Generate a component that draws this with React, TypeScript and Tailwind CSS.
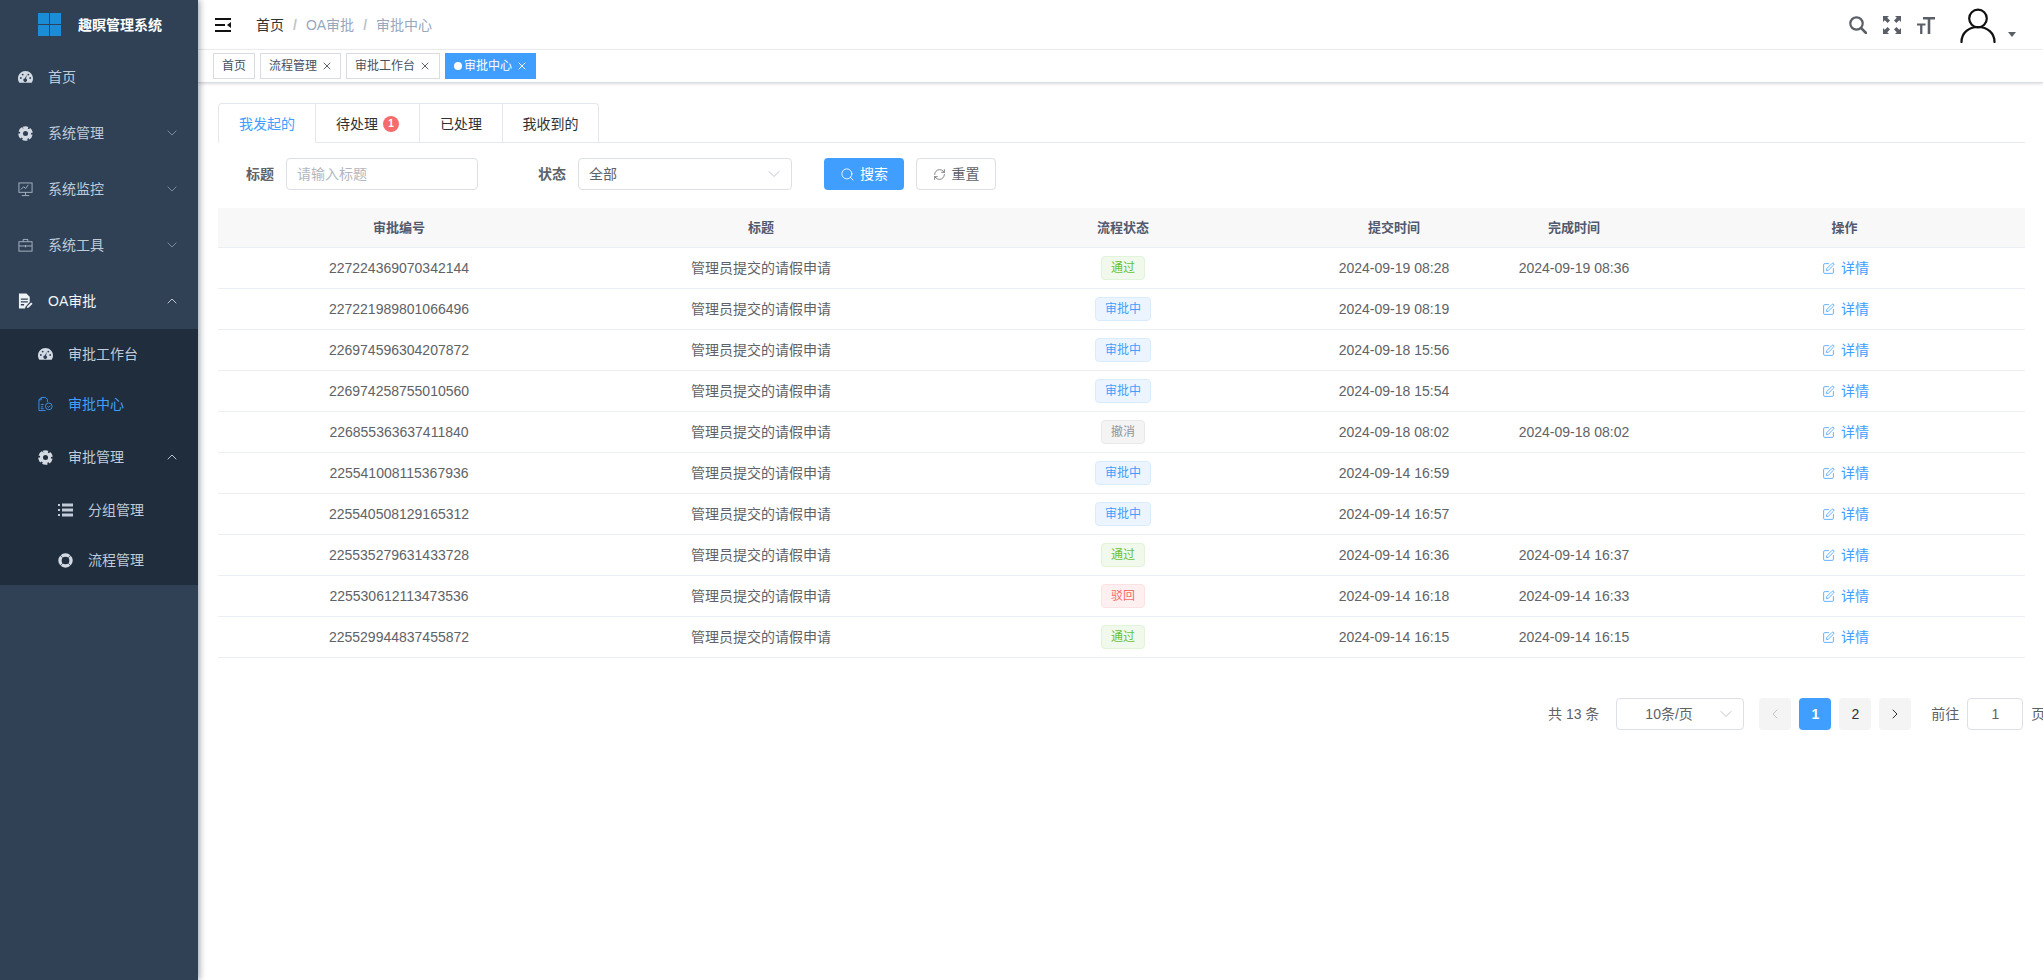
import { ChevronDown, ChevronLeft, ChevronRight, ChevronUp, RefreshCw, Search, SquarePen, X } from "lucide-react";
import type { ReactNode } from "react";

const FONT = "font-['Liberation_Sans','Noto_Sans_CJK_SC',sans-serif]";

// sidebar icons, drawn by hand because the packages have nothing close enough
function DashIcon() {
  return (
    <svg viewBox="0 0 16 14" className="h-[14px] w-[15px] shrink-0" fill="#d3dae3">
      <path d="M8 0.5C3.6 0.5 0 4.1 0 8.5c0 1.7.5 3.3 1.4 4.6h13.2c.9-1.3 1.4-2.9 1.4-4.6 0-4.4-3.6-8-8-8z" />
      <circle cx="3" cy="8" r="1" fill="#304156" />
      <circle cx="5" cy="4.4" r="1" fill="#304156" />
      <circle cx="11" cy="4.4" r="1" fill="#304156" />
      <circle cx="13" cy="8" r="1" fill="#304156" />
      <path d="M9.4 4.6 8.6 8.8a1.9 1.9 0 1 1-1.4-.2z" fill="#304156" />
    </svg>
  );
}

function GearIcon() {
  return (
    <svg viewBox="0 0 16 16" className="h-[15px] w-[15px] shrink-0" fill="none" stroke="#d3dae3">
      <circle cx="8" cy="8" r="4.3" strokeWidth="3.2" />
      <circle cx="8" cy="8" r="6.4" strokeWidth="2.6" strokeDasharray="5 1.7" transform="rotate(-112 8 8)" />
    </svg>
  );
}

function MonitorIcon() {
  return (
    <svg viewBox="0 0 16 16" className="h-[15px] w-[15px] shrink-0" fill="none" stroke="#a9b5c3" strokeWidth="1">
      <rect x="1" y="1" width="14" height="10" />
      <path d="M3 8l3-3 2 2 3-4M8 11v3M4 14.5h8" />
    </svg>
  );
}

function ToolboxIcon() {
  return (
    <svg viewBox="0 0 16 16" className="h-[15px] w-[15px] shrink-0" fill="none" stroke="#a9b5c3" strokeWidth="1">
      <rect x="1" y="4" width="14" height="10" />
      <path d="M5.5 4V1.5h5V4M1 8.5h14M8 7.5v2.5" />
    </svg>
  );
}

function DocPenIcon() {
  return (
    <svg viewBox="0 0 16 16" className="h-[16px] w-[15px] shrink-0" fill="#eef1f5">
      <path d="M1 0h8l3.5 3.500V9L8 14l-.5 2H1z" />
      <path d="M3 6h7.500M3 9h7.500M3 12h3.500" stroke="#304156" strokeWidth="1.400" />
      <path d="M9.500 15.500l.5-2 4-4 1.500 1.500-4 4z" />
    </svg>
  );
}

function DocCheckIcon() {
  return (
    <svg viewBox="0 0 16 16" className="h-[16px] w-[15px] shrink-0" fill="none" stroke="#409eff" strokeWidth="0.900">
      <path d="M3.500 1h4.500l2 2v3M8 15H1V3.500L3.500 1v2.500H1" />
      <path d="M3 8.500h3M3 11h2.500M3 13h3" />
      <circle cx="11.500" cy="10.500" r="3.600" />
      <path d="M10 10.500l1.200 1.200 1.800-2" />
    </svg>
  );
}

function ListIcon() {
  return (
    <svg viewBox="0 0 15 14" className="h-[14px] w-[15px] shrink-0" fill="#c3ccd8">
      <rect x="0" y="1" width="2" height="2" />
      <rect x="4" y="0.5" width="11" height="3" />
      <rect x="0" y="6" width="2" height="2" />
      <rect x="4" y="5.5" width="11" height="3" />
      <rect x="0" y="11" width="2" height="2" />
      <rect x="4" y="10.5" width="11" height="3" />
    </svg>
  );
}

function RingIcon() {
  return (
    <svg viewBox="0 0 16 16" className="h-[15px] w-[15px] shrink-0" fill="none">
      <circle cx="8" cy="8" r="5.900" stroke="#d3dae3" strokeWidth="3.600" />
      <path d="M1.500 1.500l3.500 3.500M14.500 1.500 11 5M1.500 14.500 5 11M14.500 14.500 11 11" stroke="#1f2d3d" strokeWidth="0.800" />
    </svg>
  );
}

function MenuRow({
  icon,
  label,
  open,
  className,
  textClass = "text-[#bfcbd9]",
}: {
  icon: ReactNode;
  label: string;
  open?: boolean;
  className: string;
  textClass?: string;
}) {
  return (
    <div className={`flex items-center ${className}`}>
      <span className="flex w-[30px] shrink-0 items-center">{icon}</span>
      <span className={`text-sm ${textClass}`}>{label}</span>
      {open === true && <ChevronUp className="ml-auto mr-[18px] h-[16px] w-[16px] text-[#e6eaf0]" strokeWidth={1.2} />}
      {open === false && <ChevronDown className="ml-auto mr-[18px] h-[16px] w-[16px] text-[#909bab]" strokeWidth={1.2} />}
    </div>
  );
}

function Sidebar() {
  return (
    <aside className="z-10 flex w-[198px] shrink-0 flex-col bg-[#304156] shadow-[2px_0_6px_rgba(0,21,41,0.35)]">
      <div className="flex h-[49px] items-center pl-[38px]">
        <div className="grid h-[23px] w-[23px] shrink-0 grid-cols-2 gap-[1.5px]">
          <i className="bg-[#1a8dd6]" />
          <i className="bg-[#1a8dd6]" />
          <i className="bg-[#1a8dd6]" />
          <i className="bg-[#1a8dd6]" />
        </div>
        <span className="ml-[17px] text-sm font-bold text-white">趣瞑管理系统</span>
      </div>
      <MenuRow className="h-[56px] pl-[18px]" icon={<DashIcon />} label="首页" />
      <MenuRow className="h-[56px] pl-[18px]" icon={<GearIcon />} label="系统管理" open={false} />
      <MenuRow className="h-[56px] pl-[18px]" icon={<MonitorIcon />} label="系统监控" open={false} />
      <MenuRow className="h-[56px] pl-[18px]" icon={<ToolboxIcon />} label="系统工具" open={false} />
      <MenuRow className="h-[56px] pl-[18px]" icon={<DocPenIcon />} label="OA审批" open textClass="text-[#f4f4f5]" />
      <div className="bg-[#1f2d3d]">
        <MenuRow className="h-[50px] pl-[38px]" icon={<DashIcon />} label="审批工作台" />
        <MenuRow className="h-[50px] pl-[38px]" icon={<DocCheckIcon />} label="审批中心" textClass="text-[#409eff]" />
        <MenuRow className="h-[56px] pl-[38px]" icon={<GearIcon />} label="审批管理" open />
        <MenuRow className="h-[50px] pl-[58px]" icon={<ListIcon />} label="分组管理" />
        <MenuRow className="h-[50px] pl-[58px]" icon={<RingIcon />} label="流程管理" />
      </div>
    </aside>
  );
}

function Navbar() {
  return (
    <header className="flex h-[50px] items-center border-b border-[#f3f3f3] pl-[17px]">
      <svg viewBox="0 0 16 14" className="h-[14px] w-[16px]" fill="#111">
        <rect x="0" y="0" width="16" height="2" />
        <rect x="0" y="6" width="10" height="2" />
        <rect x="0" y="12" width="16" height="2" />
        <path d="M16 4v6l-4-3z" />
      </svg>
      <div className="ml-[25px] flex items-center text-sm">
        <span className="text-[#303133]">首页</span>
        <span className="mx-[9px] font-bold text-[#c0c4cc]">/</span>
        <span className="text-[#97a8be]">OA审批</span>
        <span className="mx-[9px] font-bold text-[#c0c4cc]">/</span>
        <span className="text-[#97a8be]">审批中心</span>
      </div>
      <div className="ml-auto flex items-center">
        <svg viewBox="0 0 18 18" className="h-[18px] w-[18px]" fill="none" stroke="#5a5e66" strokeLinecap="round">
          <circle cx="7.500" cy="7.500" r="6.200" strokeWidth="2.200" />
          <path d="M12.200 12.200 17 17" strokeWidth="2.600" />
        </svg>
        <svg viewBox="0 0 18 18" className="ml-[16px] h-[18px] w-[18px]" fill="#5a5e66">
          <path d="M0 0h6L4.200 1.800 7 4.600 4.600 7 1.800 4.200 0 6zM18 0v6l-1.800-1.800L13.400 7 11 4.600l2.800-2.800L12 0zM0 18v-6l1.800 1.800L4.600 11 7 13.400l-2.800 2.800L6 18zM18 18h-6l1.800-1.800L11 13.400l2.400-2.400 2.800 2.800L18 12z" />
        </svg>
        <svg viewBox="0 0 18 18" className="ml-[16px] h-[18px] w-[18px]" fill="#5a5e66">
          <path d="M6 1h12v2.400h-4.700V18h-2.600V3.400H6zM0 7.500h8.500v2H5.400V18H3.100V9.500H0z" />
        </svg>
        <svg
          viewBox="0 0 36 36"
          className="ml-[25px] h-[36px] w-[36px]"
          fill="none"
          stroke="#111"
          strokeWidth="2.200"
          strokeLinecap="round"
        >
          <circle cx="18" cy="11.500" r="8.800" />
          <path d="M1.500 35c0-9 7-15 16.500-15s16.500 6 16.500 15" />
        </svg>
        <span className="ml-[12px] mr-[27px] mt-[19px] h-0 w-0 border-x-[4px] border-t-[5px] border-x-transparent border-t-[#5a5e66]" />
      </div>
    </header>
  );
}

function Tag({ label, width, active, closable = true }: { label: string; width: string; active?: boolean; closable?: boolean }) {
  return (
    <div
      className={`flex h-[26px] items-center border pl-[8px] text-xs ${width} ${
        active ? "border-[#409eff] bg-[#409eff] text-white" : "border-[#d8dce5] bg-white text-[#495060]"
      }`}
    >
      {active && <span className="mr-[2px] h-[8px] w-[8px] rounded-full bg-white" />}
      {label}
      {closable && (
        <span className="flex w-[16px] justify-end">
          <X className="h-[12px] w-[12px]" strokeWidth={1.8} />
        </span>
      )}
    </div>
  );
}

function TagsView() {
  return (
    <div className="flex h-[33px] items-start gap-[5px] border-b border-[#d8dce5] pl-[15px] pt-[3px] shadow-[0_1px_3px_0_rgba(0,0,0,0.12),0_0_3px_0_rgba(0,0,0,0.04)]">
      <Tag label="首页" width="w-[42px]" closable={false} />
      <Tag label="流程管理" width="w-[81px]" />
      <Tag label="审批工作台" width="w-[94px]" />
      <Tag label="审批中心" width="w-[91px]" active />
    </div>
  );
}

function Tabs() {
  return (
    <div className="flex h-[40px] border-b border-[#e4e7ed]">
      <div className="flex h-[40px] rounded-t border-x border-t border-[#e4e7ed] text-sm text-[#303133]">
        <div className="flex h-[39px] w-[96px] items-center justify-center border-b border-white pt-[2px] text-[#409eff]">我发起的</div>
        <div className="flex h-[39px] w-[104px] items-center justify-center border-b border-l border-[#e4e7ed] pt-[2px]">
          待处理
          <span className="ml-[5px] flex h-[16px] w-[16px] items-center justify-center rounded-full bg-[#f56c6c] text-[10px] font-bold text-white">
            1
          </span>
        </div>
        <div className="flex h-[39px] w-[83px] items-center justify-center border-b border-l border-[#e4e7ed] pt-[2px]">已处理</div>
        <div className="flex h-[39px] w-[96px] items-center justify-center border-b border-l border-[#e4e7ed] pt-[2px]">我收到的</div>
      </div>
    </div>
  );
}

function SearchForm() {
  return (
    <div className="mt-[15px] flex h-[32px] items-center text-sm">
      <span className="ml-[28px] font-bold text-[#606266]">标题</span>
      <div className="ml-[12px] flex h-[32px] w-[192px] items-center rounded border border-[#dcdfe6] px-[10px] text-[#b3b7bf]">
        请输入标题
      </div>
      <span className="ml-[60px] font-bold text-[#606266]">状态</span>
      <div className="ml-[12px] flex h-[32px] w-[214px] items-center justify-between rounded border border-[#dcdfe6] pl-[10px] pr-[7px] text-[#606266]">
        全部
        <ChevronDown className="h-[20px] w-[20px] text-[#b3b7bf]" strokeWidth={1} />
      </div>
      <button className="ml-[32px] flex h-[32px] w-[80px] items-center justify-center gap-[5px] rounded bg-[#409eff] text-white">
        <Search className="h-[15px] w-[15px]" strokeWidth={1.4} />
        搜索
      </button>
      <button className="ml-[12px] flex h-[32px] w-[80px] items-center justify-center gap-[6px] rounded border border-[#dcdfe6] text-[#606266]">
        <RefreshCw className="h-[13px] w-[13px]" strokeWidth={1.4} />
        重置
      </button>
    </div>
  );
}

const STATUS = {
  pass: { label: "通过", cls: "w-[44px] border-[#e1f3d8] bg-[#f0f9eb] text-[#67c23a]" },
  doing: { label: "审批中", cls: "w-[56px] border-[#d9ecff] bg-[#ecf5ff] text-[#409eff]" },
  cancel: { label: "撤消", cls: "w-[44px] border-[#e9e9eb] bg-[#f4f4f5] text-[#909399]" },
  reject: { label: "驳回", cls: "w-[44px] border-[#fde2e2] bg-[#fef0f0] text-[#f56c6c]" },
};

type Row = { id: string; status: keyof typeof STATUS; submit: string; done?: string };

const ROWS: Row[] = [
  { id: "227224369070342144", status: "pass", submit: "2024-09-19 08:28", done: "2024-09-19 08:36" },
  { id: "227221989801066496", status: "doing", submit: "2024-09-19 08:19" },
  { id: "226974596304207872", status: "doing", submit: "2024-09-18 15:56" },
  { id: "226974258755010560", status: "doing", submit: "2024-09-18 15:54" },
  { id: "226855363637411840", status: "cancel", submit: "2024-09-18 08:02", done: "2024-09-18 08:02" },
  { id: "225541008115367936", status: "doing", submit: "2024-09-14 16:59" },
  { id: "225540508129165312", status: "doing", submit: "2024-09-14 16:57" },
  { id: "225535279631433728", status: "pass", submit: "2024-09-14 16:36", done: "2024-09-14 16:37" },
  { id: "225530612113473536", status: "reject", submit: "2024-09-14 16:18", done: "2024-09-14 16:33" },
  { id: "225529944837455872", status: "pass", submit: "2024-09-14 16:15", done: "2024-09-14 16:15" },
];

function DataTable() {
  return (
    <table className="mt-[18px] w-full table-fixed border-collapse text-center">
      <colgroup>
        <col className="w-[362px]" />
        <col className="w-[362px]" />
        <col className="w-[362px]" />
        <col className="w-[180px]" />
        <col className="w-[180px]" />
        <col />
      </colgroup>
      <thead>
        <tr className="h-[39px] border-b border-[#ebeef5] bg-[#f8f8f9] text-[13px] font-bold text-[#515a6e]">
          <th>审批编号</th>
          <th>标题</th>
          <th>流程状态</th>
          <th>提交时间</th>
          <th>完成时间</th>
          <th>操作</th>
        </tr>
      </thead>
      <tbody className="text-sm text-[#606266]">
        {ROWS.map((r) => (
          <tr key={r.id} className="h-[41px] border-b border-[#ebeef5]">
            <td>{r.id}</td>
            <td>管理员提交的请假申请</td>
            <td>
              <span
                className={`inline-flex h-[24px] items-center justify-center rounded border align-middle text-xs ${STATUS[r.status].cls}`}
              >
                {STATUS[r.status].label}
              </span>
            </td>
            <td>{r.submit}</td>
            <td>{r.done}</td>
            <td>
              <span className="inline-flex items-center gap-[6px] pl-[2px] pt-[3px] text-[#409eff]">
                <SquarePen className="h-[13px] w-[13px]" strokeWidth={1.5} />
                详情
              </span>
            </td>
          </tr>
        ))}
      </tbody>
    </table>
  );
}

function Pagination() {
  return (
    <div className="mt-[40px] flex h-[32px] items-center whitespace-nowrap pl-[1330px] text-sm text-[#606266]">
      <span>共 13 条</span>
      <div className="ml-[17px] flex h-[32px] w-[128px] shrink-0 items-center justify-between rounded border border-[#dcdfe6] pl-[28px] pr-[7px]">
        10条/页
        <ChevronDown className="h-[20px] w-[20px] text-[#b3b7bf]" strokeWidth={1} />
      </div>
      <div className="ml-[15px] flex h-[32px] w-[32px] shrink-0 items-center justify-center rounded-sm bg-[#f4f4f5] text-[#c0c4cc]">
        <ChevronLeft className="h-[16px] w-[16px]" strokeWidth={1.5} />
      </div>
      <div className="ml-[8px] flex h-[32px] w-[32px] shrink-0 items-center justify-center rounded-sm bg-[#409eff] font-bold text-white">1</div>
      <div className="ml-[8px] flex h-[32px] w-[32px] shrink-0 items-center justify-center rounded-sm bg-[#f4f4f5] text-[#303133]">2</div>
      <div className="ml-[8px] flex h-[32px] w-[32px] shrink-0 items-center justify-center rounded-sm bg-[#f4f4f5] text-[#303133]">
        <ChevronRight className="h-[16px] w-[16px]" strokeWidth={1.5} />
      </div>
      <span className="ml-[20px]">前往</span>
      <div className="ml-[8px] flex h-[32px] w-[56px] shrink-0 items-center justify-center rounded border border-[#dcdfe6]">1</div>
      <span className="ml-[8px]">页</span>
    </div>
  );
}

export default function App() {
  return (
    <div className={`flex h-[980px] w-[2043px] overflow-hidden bg-white ${FONT}`}>
      <Sidebar />
      <div className="flex min-w-0 flex-1 flex-col">
        <Navbar />
        <TagsView />
        <main className="pl-[20px] pr-[18px] pt-[20px]">
          <Tabs />
          <SearchForm />
          <DataTable />
          <Pagination />
        </main>
      </div>
    </div>
  );
}
